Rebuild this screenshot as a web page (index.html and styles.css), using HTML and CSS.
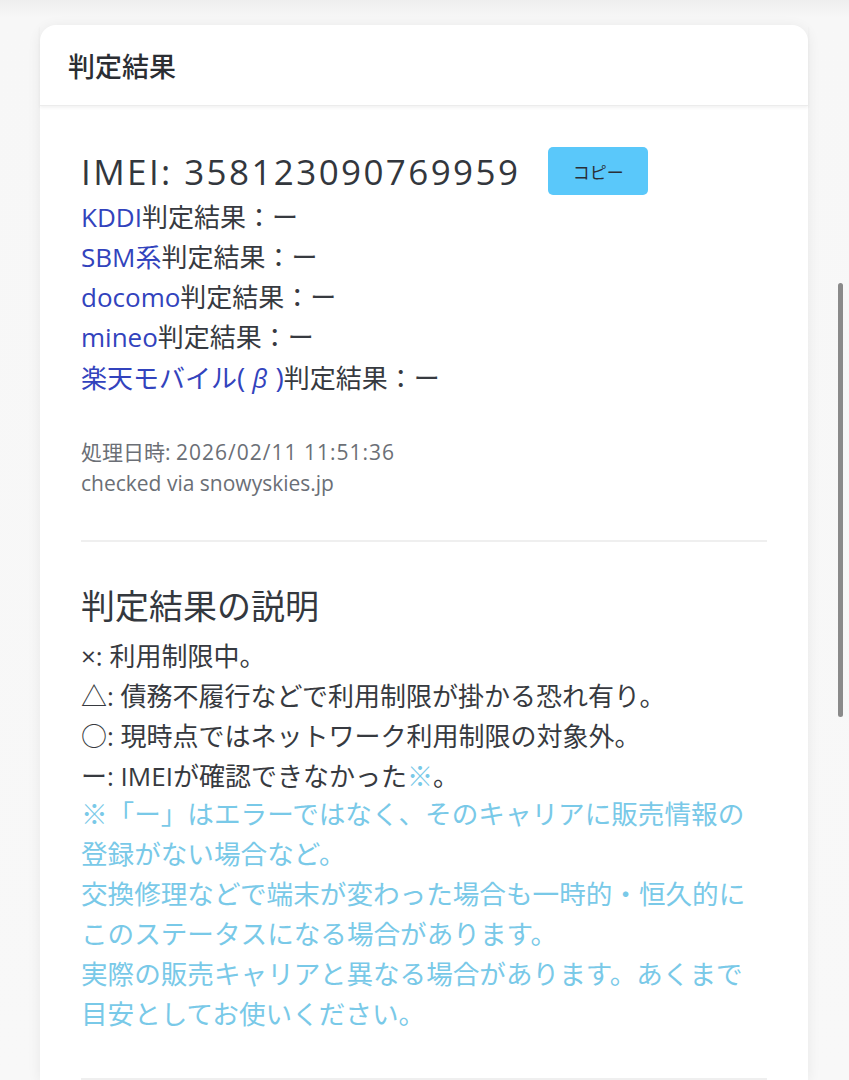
FILE: index.html
```html
<!DOCTYPE html>
<html lang="ja">

<head>
  <meta charset="UTF-8">
  <meta name="viewport" content="width=device-width, initial-scale=1.0">
  <title>IMEI判定結果</title>
  <link rel="stylesheet" href="styles.css">
</head>

<body>
  <div class="page">
    <div class="card">
      <div class="card-header">判定結果</div>
      <div class="card-body">
        <div class="imei-row">
          <span class="imei">IMEI: 358123090769959</span>
          <button class="copy-btn">コピー</button>
        </div>
        <div class="results">
          <div><a href="#">KDDI</a>判定結果：ー</div>
          <div><a href="#">SBM系</a>判定結果：ー</div>
          <div><a href="#">docomo</a>判定結果：ー</div>
          <div><a href="#">mineo</a>判定結果：ー</div>
          <div><a href="#">楽天モバイル<span class="paren">(</span><span class="beta">β</span><span class="paren">)</span></a>判定結果：ー</div>
        </div>
        <div class="meta">
          <div>処理日時: <span class="date">2026/02/11 11:51:36</span></div>
          <div>checked via snowyskies.jp</div>
        </div>
        <hr class="divider">
        <h3 class="desc-title">判定結果の説明</h3>
        <div class="legend">
          <div>×: 利用制限中。</div>
          <div>△: 債務不履行などで利用制限が掛かる恐れ有り。</div>
          <div>○: 現時点ではネットワーク利用制限の対象外。</div>
          <div>ー: IMEIが確認できなかった<span class="note-mark">※</span>。</div>
        </div>
        <div class="notes">
          ※「ー」はエラーではなく、そのキャリアに販売情報の登録がない場合など。<br>
          交換修理などで端末が変わった場合も一時的・恒久的にこのステータスになる場合があります。<br>
          実際の販売キャリアと異なる場合があります。あくまで目安としてお使いください。
        </div>
        <hr class="divider bottom">
      </div>
    </div>
  </div>
  <div class="scroll-thumb"></div>
</body>

</html>
```

FILE: styles.css
```css
body {
  margin: 0;
  background: linear-gradient(#eeeeee, #f7f7f7 18px, #f8f8f8);
  font-family: "Open Sans", "Noto Sans CJK JP", sans-serif;
  color: #373a40;
  overflow: hidden;
}

.page {
  padding: 25px 41px 0 40px;
}

.card {
  background: #fff;
  border-radius: 16px 16px 0 0;
  box-shadow: 0 2px 14px rgba(0, 0, 0, 0.07);
}

.card-header {
  height: 80px;
  display: flex;
  align-items: center;
  padding-left: 28px;
  font-size: 27px;
  font-weight: 500;
  color: #2b2e33;
  border-bottom: 1px solid #ececec;
  box-shadow: 0 2px 3px rgba(0, 0, 0, 0.05);
}

.card-body {
  padding: 41px 41px 0 41px;
}

.imei-row {
  display: flex;
  align-items: center;
  height: 48px;
  margin-bottom: 2px;
}

.imei {
  font-size: 35px;
  letter-spacing: 2.4px;
  color: #33373d;
}

.copy-btn {
  margin-left: 28px;
  width: 100px;
  height: 48px;
  border: none;
  border-radius: 5px;
  background: #5ac8fa;
  color: #2a2f36;
  font-family: "Noto Sans CJK JP", sans-serif;
  font-size: 17px;
}

.results {
  font-size: 26px;
  line-height: 40px;
}

.results a {
  color: #3243bd;
  text-decoration: none;
}

.paren {
  font-size: 28px;
}

.beta {
  display: inline-block;
  padding: 0 8px 0 7px;
  font-style: italic;
}

.meta {
  margin-top: 39px;
  font-size: 21px;
  line-height: 31px;
  color: #6b6f76;
}

.date {
  letter-spacing: 1px;
}

.divider {
  border: none;
  height: 2px;
  background: #efefef;
  margin: 41px 0 0 0;
}

.divider.bottom {
  margin-top: 44px;
}

.desc-title {
  margin: 40px 0 6px 0;
  font-size: 34px;
  font-weight: 400;
  line-height: 48px;
  color: #34383e;
}

.legend {
  font-size: 26px;
  line-height: 40px;
}

.note-mark {
  color: #79c9e8;
}

.notes {
  font-size: 26.6px;
  line-height: 40px;
  color: #79c9e8;
  margin-top: -2px;
}

.scroll-thumb {
  position: fixed;
  top: 283px;
  left: 838px;
  width: 5px;
  height: 434px;
  border-radius: 3px;
  background: #8a8a8a;
}
```
